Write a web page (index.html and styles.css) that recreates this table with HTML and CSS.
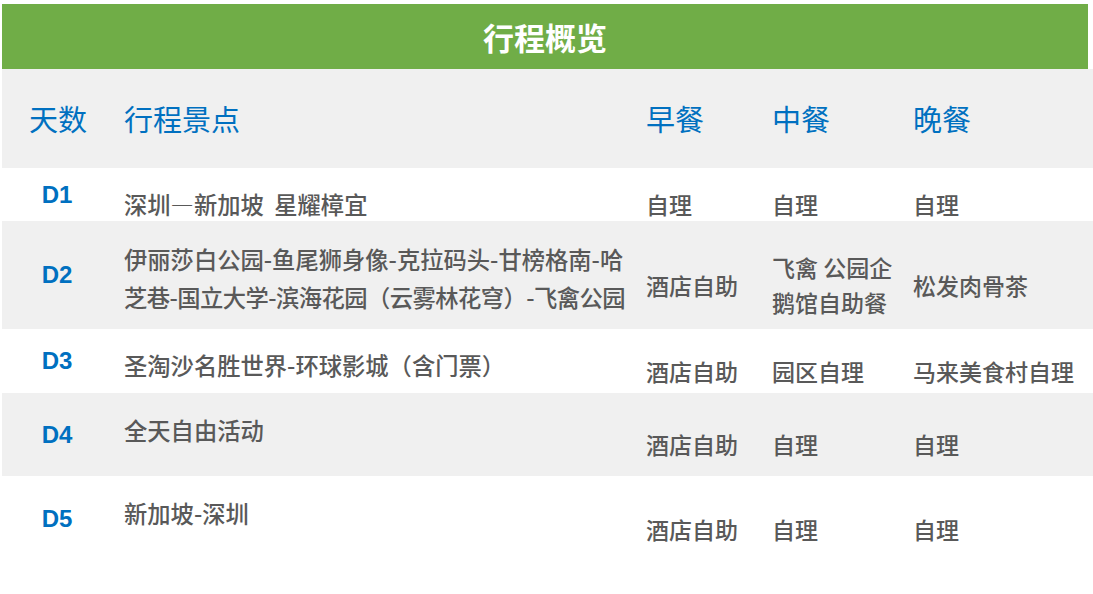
FILE: index.html
```html
<!DOCTYPE html>
<html lang="zh-CN">
<head>
<meta charset="utf-8">
<title>行程概览</title>
<link rel="stylesheet" href="styles.css">
</head>
<body>
<div class="page">
  <div class="title">行程概览</div>
  <div class="table">
    <div class="row head">
      <div class="cell day-h">天数</div>
      <div class="cell">行程景点</div>
      <div class="cell">早餐</div>
      <div class="cell">中餐</div>
      <div class="cell">晚餐</div>
    </div>
    <div class="row r1">
      <div class="cell day">D1</div>
      <div class="cell itin">深圳—新加坡&nbsp; 星耀樟宜</div>
      <div class="cell meal">自理</div>
      <div class="cell meal">自理</div>
      <div class="cell meal">自理</div>
    </div>
    <div class="row r2 alt">
      <div class="cell day">D2</div>
      <div class="cell itin two">伊丽莎白公园-鱼尾狮身像-克拉码头-甘榜格南-哈<br><span class="tight">芝巷-国立大学-滨海花园（云雾林花穹）-飞禽公园</span></div>
      <div class="cell meal">酒店自助</div>
      <div class="cell meal two-meal">飞禽 公园企<br>鹅馆自助餐</div>
      <div class="cell meal">松发肉骨茶</div>
    </div>
    <div class="row r3">
      <div class="cell day">D3</div>
      <div class="cell itin">圣淘沙名胜世界-环球影城（含门票）</div>
      <div class="cell meal">酒店自助</div>
      <div class="cell meal">园区自理</div>
      <div class="cell meal">马来美食村自理</div>
    </div>
    <div class="row r4 alt">
      <div class="cell day">D4</div>
      <div class="cell itin">全天自由活动</div>
      <div class="cell meal">酒店自助</div>
      <div class="cell meal">自理</div>
      <div class="cell meal">自理</div>
    </div>
    <div class="row r5">
      <div class="cell day">D5</div>
      <div class="cell itin">新加坡-深圳</div>
      <div class="cell meal">酒店自助</div>
      <div class="cell meal">自理</div>
      <div class="cell meal">自理</div>
    </div>
  </div>
</div>
</body>
</html>
```

FILE: styles.css
```css
html, body {
  margin: 0;
  padding: 0;
  background: #ffffff;
}

body {
  font-family: "Noto Sans CJK SC", "Noto Sans", sans-serif;
  overflow: hidden;
}

.page {
  padding: 4px 0 0 2px;
}

.title {
  width: 1086px;
  height: 65px;
  background: #70ad47;
  color: #ffffff;
  font-size: 31px;
  font-weight: 700;
  display: flex;
  align-items: center;
  justify-content: center;
  line-height: 1;
}

.table {
  width: 1091px;
}

.row {
  display: grid;
  grid-template-columns: 110px 522px 126px 141px 1fr;
  align-items: center;
}

.cell {
  padding-left: 12px;
  white-space: nowrap;
}

.head {
  height: 99px;
  background: #f0f0f0;
  color: #0070c0;
  font-size: 29px;
  line-height: 1;
}

.head .day-h {
  padding-left: 27px;
}

.alt {
  background: #f0f0f0;
}

.day {
  padding-left: 0;
  text-align: center;
  color: #0070c0;
  font-family: "Liberation Sans", Arial, sans-serif;
  font-weight: 700;
  font-size: 24px;
  line-height: 1;
}

.itin,
.meal {
  color: #595959;
  font-size: 23px;
  font-weight: 500;
  line-height: 1;
}

.itin {
  font-size: 23.3px;
}

.tight {
  letter-spacing: -0.55px;
}

.meal {
  padding-top: 20px;
}

.itin.two {
  line-height: 38px;
}

.meal.two-meal {
  line-height: 35px;
}

.r1 { height: 53px; }
.r2 { height: 108px; }
.r3 { height: 64px; }
.r4 { height: 83px; }
.r5 { height: 86px; }

.r1 .itin { padding-top: 20px; }
.r2 .itin { padding-top: 6px; }
.r3 .itin { padding-top: 10px; }
.r4 .itin { padding-bottom: 7px; }
.r5 .itin { padding-bottom: 10px; }
```
